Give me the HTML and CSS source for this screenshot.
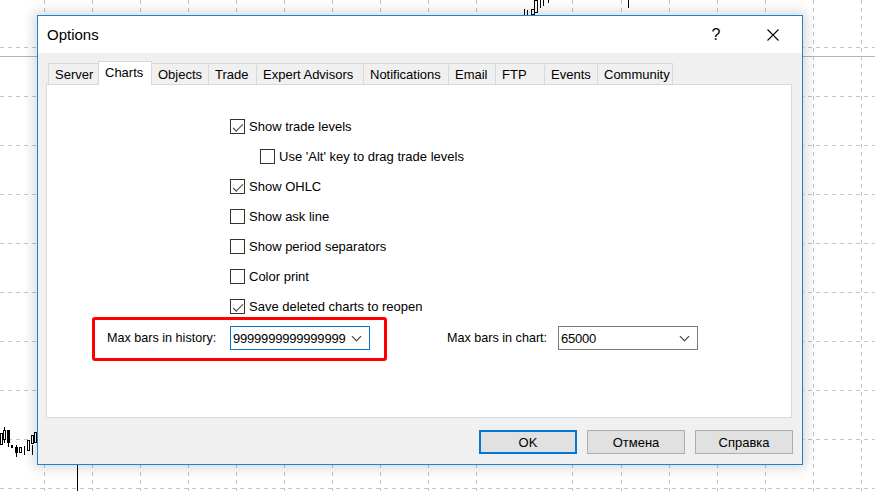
FILE: index.html
```html
<!DOCTYPE html>
<html lang="en">
<head>
  <meta charset="UTF-8">
  <title>Options</title>
  <link rel="stylesheet" href="styles.css">
</head>
<body>
  <div class="desk">
    <!-- chart behind the dialog -->
    <svg class="chart" width="875" height="491" viewBox="0 0 875 491">
      <path class="grid" d="M44.5 0V491M92.5 0V491M140.5 0V491M188.5 0V491M236.5 0V491M284.5 0V491M332.5 0V491M380.5 0V491M428.5 0V491M476.5 0V491M572.5 0V491M621.5 0V491M669.5 0V491M717.5 0V491M765.5 0V491M813.5 0V491M861.5 0V491"/>
      <path class="grid" d="M0 47.5H875M0 96.5H875M0 145.5H875M0 194.5H875M0 243.5H875M0 292.5H875M0 341.5H875M0 390.5H875M0 439.5H875M0 488.5H875"/>
      <path class="axis" d="M0 56.5H875"/>
      <g class="candles">
        <path d="M524.5 9V15M527.5 10V15M540.5 0V8M543.5 0V6M548.5 0V3M628.5 0V8M77.5 460V491M4.5 427V443M8.5 443V447M16.5 445V457M24.5 446V455M32.5 445V455"/>
        <rect class="up" x="531.5" y="9.5" width="3" height="5"/>
        <rect class="up" x="534.5" y="0.5" width="3" height="12"/>
        <rect class="up" x="0.5" y="433.5" width="2" height="11"/>
        <rect class="up" x="3.5" y="430.5" width="2" height="9"/>
        <rect class="down" x="7" y="430" width="3" height="13"/>
        <rect class="down" x="11" y="445" width="2" height="3"/>
        <rect class="down" x="15" y="447" width="3" height="6"/>
        <rect class="up" x="19.5" y="447.5" width="2" height="5"/>
        <rect class="up" x="27.5" y="440.5" width="2" height="10"/>
        <rect class="up" x="31.5" y="435.5" width="2" height="8"/>
        <rect class="up" x="34.5" y="432.5" width="2" height="10"/>
      </g>
    </svg>

    <div class="dialog">
      <div class="titlebar">
        <span class="title">Options</span>
        <span class="help">?</span>
        <span class="close">
          <svg width="12" height="12" viewBox="0 0 12 12"><path d="M0.5 0.5L11.5 11.5M11.5 0.5L0.5 11.5"/></svg>
        </span>
      </div>

      <div class="client">
        <div class="tabs">
          <div class="tab" style="width:51px">Server</div>
          <div class="tab active" style="width:54px">Charts</div>
          <div class="tab" style="width:58px">Objects</div>
          <div class="tab" style="width:49px">Trade</div>
          <div class="tab" style="width:108px">Expert Advisors</div>
          <div class="tab" style="width:86px">Notifications</div>
          <div class="tab" style="width:48px">Email</div>
          <div class="tab" style="width:50px">FTP</div>
          <div class="tab" style="width:54px">Events</div>
          <div class="tab" style="width:76px">Community</div>
        </div>

        <div class="panel">
          <div class="checks">
            <div class="check on"><span class="box"></span>Show trade levels</div>
            <div class="check sub"><span class="box"></span>Use 'Alt' key to drag trade levels</div>
            <div class="check on"><span class="box"></span>Show OHLC</div>
            <div class="check"><span class="box"></span>Show ask line</div>
            <div class="check"><span class="box"></span>Show period separators</div>
            <div class="check"><span class="box"></span>Color print</div>
            <div class="check on"><span class="box"></span>Save deleted charts to reopen</div>
          </div>

          <div class="limits">
            <span class="label first">Max bars in history:</span>
            <div class="combo focus"><span>9999999999999999</span><i class="chev"></i></div>
            <span class="label second">Max bars in chart:</span>
            <div class="combo"><span>65000</span><i class="chev"></i></div>
          </div>
        </div>

        <div class="buttons">
          <button class="btn default">OK</button>
          <button class="btn">Отмена</button>
          <button class="btn">Справка</button>
        </div>
      </div>
    </div>

    <div class="mark"></div>
  </div>
</body>
</html>
```

FILE: styles.css
```css
body {
  margin: 0;
  font-family: "Liberation Sans", Arial, sans-serif;
  font-size: 13px;
  color: #000;
  background: #fff;
}
.desk {
  position: relative;
  width: 875px;
  height: 491px;
  overflow: hidden;
}
/* Chart background */
.chart {
  position: absolute;
  top: 0;
  left: 0;
}
.grid {
  stroke: #c4c4c4;
  stroke-width: 1;
  stroke-dasharray: 4 4;
  fill: none;
}
.axis {
  stroke: #b4b4b4;
  stroke-width: 1;
}
.candles path {
  stroke: #000;
  stroke-width: 1;
}
.candles .up {
  fill: #fff;
  stroke: #000;
  stroke-width: 1;
}
.candles .down {
  fill: #000;
}
/* Dialog window */
.dialog {
  position: absolute;
  left: 37px;
  top: 15px;
  width: 766px;
  height: 450px;
  box-sizing: border-box;
  border: 1px solid #1883d7;
  background: #f0f0f0;
  box-shadow: 0 0 12px 3px rgba(0, 0, 0, 0.16);
  display: flex;
  flex-direction: column;
}
.titlebar {
  height: 37px;
  background: #fff;
  display: flex;
  align-items: center;
}
.title {
  padding-left: 9px;
  font-size: 15px;
  flex: 1;
}
.help {
  width: 30px;
  text-align: center;
  font-size: 16px;
}
.close {
  width: 30px;
  margin-left: 27px;
  margin-right: 14px;
  display: flex;
  justify-content: center;
}
.close path {
  stroke: #000;
  stroke-width: 1.1;
}
.client {
  padding: 8px 10px 0 8px;
}
/* Tabs */
.tabs {
  display: flex;
  align-items: flex-end;
  height: 23px;
  padding-left: 2px;
}
.tab {
  box-sizing: border-box;
  height: 21px;
  padding: 3px 0 0 6px;
  border: 1px solid #d9d9d9;
  border-bottom: none;
  margin-left: -1px;
  white-space: nowrap;
}
.tab:first-child {
  margin-left: 0;
}
.tab.active {
  height: 24px;
  margin-bottom: -1px;
  padding-top: 3px;
  background: #fff;
  position: relative;
  z-index: 1;
}
.panel {
  box-sizing: border-box;
  width: 746px;
  height: 334px;
  background: #fff;
  border: 1px solid #d9d9d9;
  padding-top: 26px;
}
/* Check boxes */
.checks {
  padding-left: 183px;
}
.check {
  height: 30px;
  display: flex;
  align-items: center;
  white-space: nowrap;
}
.check.sub {
  padding-left: 30px;
}
.box {
  box-sizing: border-box;
  width: 15px;
  height: 15px;
  border: 1px solid #333;
  margin-right: 4px;
  position: relative;
}
.check.on .box::after {
  content: "";
  position: absolute;
  left: 3px;
  top: 1px;
  width: 7px;
  height: 4px;
  border-left: 1.2px solid #444;
  border-bottom: 1.2px solid #444;
  transform: translate(0, 3px) rotate(-45deg) scaleX(1.25);
}
/* Bars limits */
.limits {
  display: flex;
  align-items: center;
  margin-top: 5px;
  padding-left: 60px;
  font-size: 12.6px;
}
.label.first {
  width: 123px;
}
.label.second {
  width: 111px;
  margin-left: 77px;
}
.combo {
  box-sizing: border-box;
  width: 140px;
  height: 24px;
  border: 1px solid #7a7a7a;
  display: flex;
  align-items: center;
  padding-left: 2px;
  font-size: 13px;
  letter-spacing: -0.2px;
}
.combo.focus {
  border-color: #0078d7;
}
.combo span {
  flex: 1;
}
.chev {
  width: 6px;
  height: 6px;
  border-right: 1px solid #333;
  border-bottom: 1px solid #333;
  transform: rotate(45deg);
  margin: 0 9px 4px 0;
}
/* Bottom buttons */
.buttons {
  display: flex;
  justify-content: flex-end;
  gap: 10px;
  margin-top: 12px;
  margin-right: -1px;
}
.btn {
  box-sizing: border-box;
  width: 98px;
  height: 24px;
  background: #e1e1e1;
  border: 1px solid #adadad;
  font-family: "Liberation Sans", Arial, sans-serif;
  font-size: 13px;
  color: #000;
  padding: 0;
}
.btn.default {
  border: 2px solid #0078d7;
}
/* Red highlight drawn over the dialog */
.mark {
  position: absolute;
  left: 92px;
  top: 317px;
  width: 295px;
  height: 44px;
  box-sizing: border-box;
  border: 3px solid #f00;
  border-radius: 3px;
}
```
